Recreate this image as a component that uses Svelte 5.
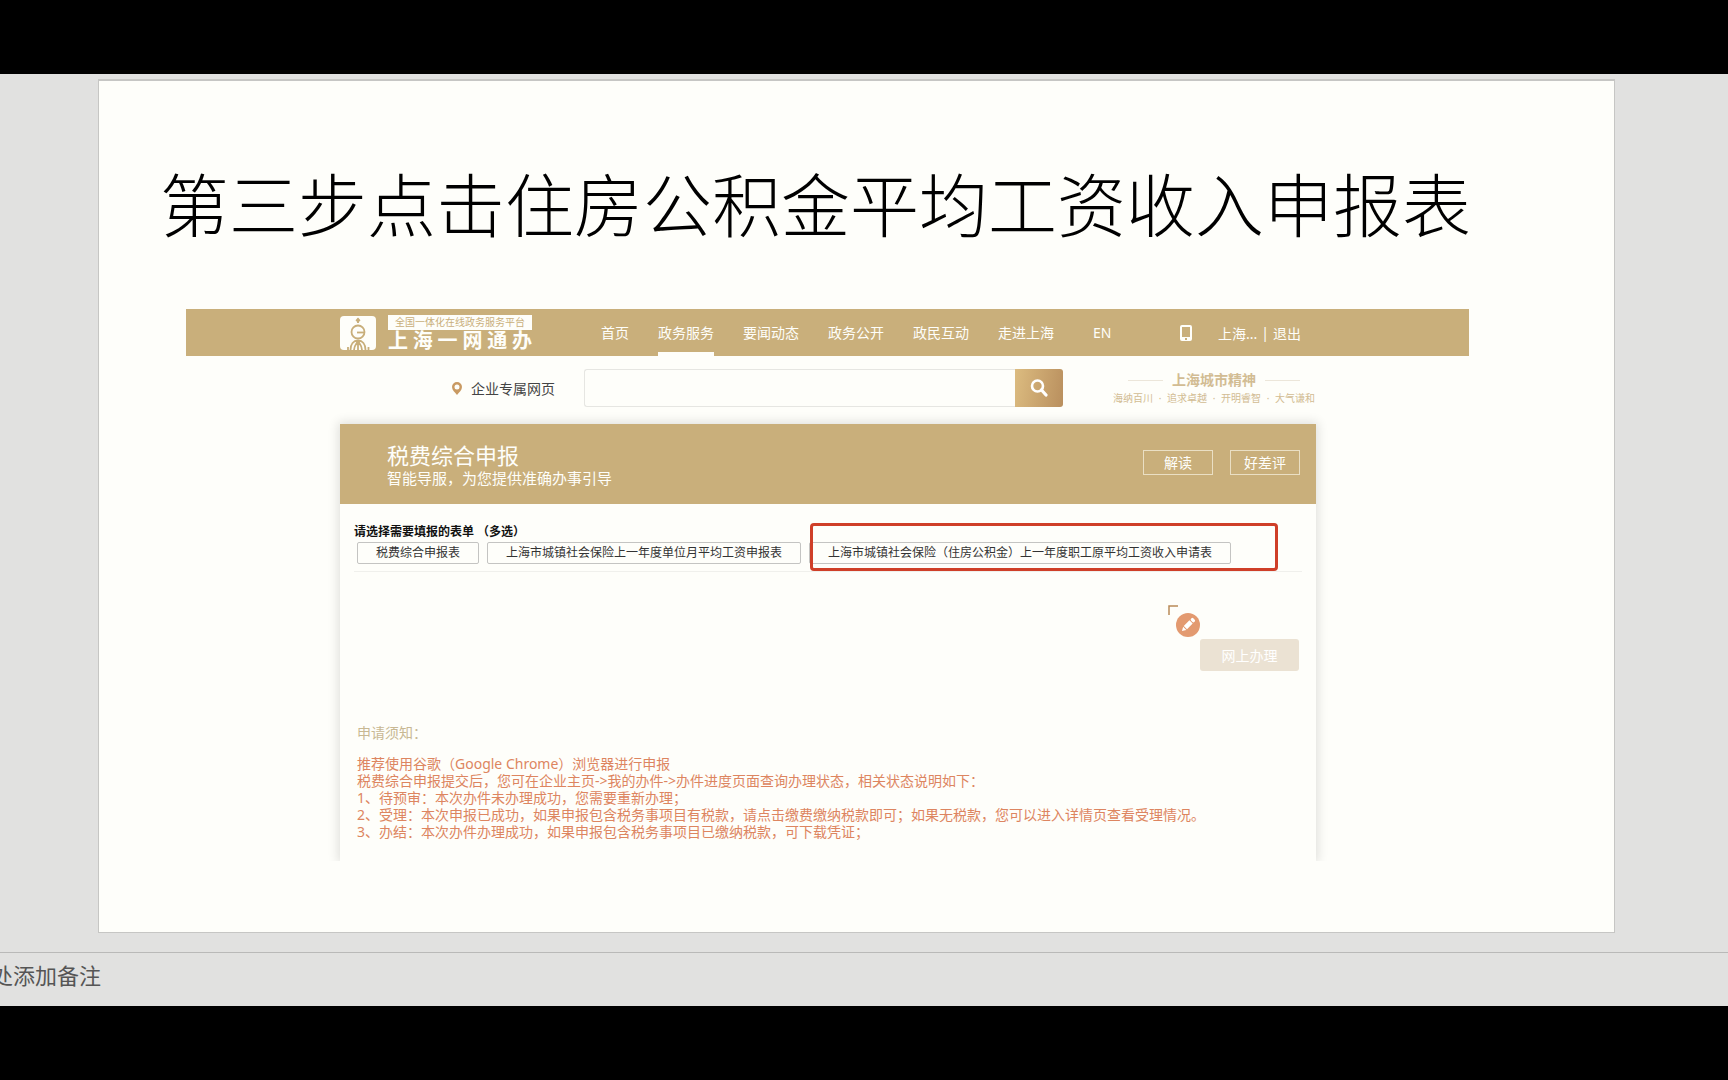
<script>
  const nav = ['首页', '政务服务', '要闻动态', '政务公开', '政民互动', '走进上海'];
  const active = '政务服务';
  const forms = ['税费综合申报表', '上海市城镇社会保险上一年度单位月平均工资申报表'];
  const target = '上海市城镇社会保险（住房公积金）上一年度职工原平均工资收入申请表';
  const notices = [
    '推荐使用谷歌（Google Chrome）浏览器进行申报',
    '税费综合申报提交后，您可在企业主页->我的办件->办件进度页面查询办理状态，相关状态说明如下：',
    '1、待预审：本次办件未办理成功，您需要重新办理；',
    '2、受理：本次申报已成功，如果申报包含税务事项目有税款，请点击缴费缴纳税款即可；如果无税款，您可以进入详情页查看受理情况。',
    '3、办结：本次办件办理成功，如果申报包含税务事项目已缴纳税款，可下载凭证；'
  ];
</script>

<div class="screen">
  <main class="stage">
    <article class="slide">
      <h1>第三步点击住房公积金平均工资收入申报表</h1>

      <section class="site">
        <header class="bar">
          <a class="brand" href="#home">
            <svg class="logo" viewBox="0 0 36 34" aria-hidden="true">
              <rect width="36" height="34" rx="4" fill="#fefefa" />
              <g fill="none" stroke="#c8ae7a" stroke-width="1.800">
                <path d="M18 7V2.500" />
                <circle cx="18" cy="16" r="6.500" />
                <path d="M17 16.500h7" />
                <path d="M10.500 34c0-6 3-9.500 7.500-9.500s7.500 3.500 7.500 9.500M18 25v9M14 34c0-4 2-6 4-9 2 3 4 5 4 9" />
                <path d="M8 34v-3M28.500 34v-3" />
              </g>
              <path d="M18 1.500l2.500 2.700L18 7l-2.500-2.800z" fill="#c8ae7a" />
            </svg>
            <span class="names">
              <span class="tag">全国一体化在线政务服务平台</span>
              <strong>上海一网通办</strong>
            </span>
          </a>
          <nav>
            {#each nav as item}
              <a href="#nav" class:on={item === active}>{item}</a>
            {/each}
            <a class="en" href="#en">EN</a>
          </nav>
          <div class="account">
            <svg class="phone" viewBox="0 0 12 16" aria-hidden="true">
              <path fill="#fefefa" fill-rule="evenodd" d="M2 0h8a2 2 0 0 1 2 2v12a2 2 0 0 1-2 2H2a2 2 0 0 1-2-2V2a2 2 0 0 1 2-2zM2 2v10h8V2zM5 13v2h2v-2z" />
            </svg>
            <span>上海...</span><span class="sep">|</span><a href="#logout">退出</a>
          </div>
        </header>

        <div class="tools">
          <a class="place" href="#company">
            <svg viewBox="0 0 10 13" aria-hidden="true">
              <path fill="#c99a62" fill-rule="evenodd" d="M5 0a5 5 0 0 1 5 5c0 3-3 5.500-5 8-2-2.500-5-5-5-8a5 5 0 0 1 5-5zM5 2.500a2.500 2.500 0 1 0 0 5 2.500 2.500 0 0 0 0-5z" />
            </svg>
            企业专属网页
          </a>
          <form class="search">
            <input type="text" aria-label="搜索" />
            <button type="button" aria-label="搜索">
              <svg viewBox="0 0 18 18" aria-hidden="true">
                <circle cx="7.500" cy="7" r="5.500" fill="none" stroke="#fff" stroke-width="2.600" />
                <path d="M11.500 11l4.500 5" stroke="#fff" stroke-width="3.200" stroke-linecap="round" />
              </svg>
            </button>
          </form>
          <div class="spirit">
            <div class="motto">上海城市精神</div>
            <div class="virtues">
              <span>海纳百川</span><i>·</i><span>追求卓越</span><i>·</i><span>开明睿智</span><i>·</i><span>大气谦和</span>
            </div>
          </div>
        </div>

        <section class="card">
          <header class="head">
            <div>
              <h2>税费综合申报</h2>
              <p>智能导服，为您提供准确办事引导</p>
            </div>
            <div class="links">
              <button type="button">解读</button>
              <button type="button">好差评</button>
            </div>
          </header>
          <div class="body">
            <div class="pick">
              <h3>请选择需要填报的表单 （多选）</h3>
              <div class="forms">
                {#each forms as form}
                  <button type="button">{form}</button>
                {/each}
                <div class="marked"><button type="button">{target}</button></div>
              </div>
            </div>
            <div class="actions">
              <span class="float">
                <svg viewBox="0 0 32 32" aria-hidden="true">
                  <path d="M1 10V1h9" fill="none" stroke="#b98a58" stroke-width="1.500" />
                  <circle cx="20" cy="20" r="12" fill="#e39a70" />
                  <g transform="rotate(45 20 20)" fill="#fff">
                    <rect x="17.700" y="11.500" width="4.600" height="3.200" rx="1.300" />
                    <path d="M17.700 15.700h4.600v8h-4.600zM17.700 24.600h4.600L20 28.500z" />
                  </g>
                </svg>
              </span>
              <button type="button" disabled>网上办理</button>
            </div>
            <div class="notice">
              <h4>申请须知：</h4>
              {#each notices as line}
                <p>{line}</p>
              {/each}
            </div>
          </div>
        </section>
      </section>
    </article>
  </main>
  <footer>处添加备注</footer>
</div>

<style>
  :global(body) {
    margin: 0;
    background: #000;
    font-family: 'Noto Sans', 'Noto Sans CJK SC', sans-serif;
  }
  .screen, .screen * { box-sizing: border-box; }
  h1, h2, h3, h4, p { margin: 0; font-weight: 400; }
  a { color: inherit; text-decoration: none; }
  button { font: inherit; padding: 0; margin: 0; }
  svg { display: block; }

  .screen {
    min-height: 100vh;
    padding: 74px 0;
    display: flex;
    flex-direction: column;
    overflow: hidden;
    background: #000;
  }
  .stage {
    flex: 1;
    padding: 5px 113px 18px 98px;
    background: #e1e1e0;
  }
  .slide {
    padding: 79px 145px 71px 87px;
    background: #fefefa;
    border: 1px solid #c6c6c4;
    border-top-width: 2px;
  }
  h1 {
    height: 84px;
    margin: 0 -100px 65px -26px;
    font-family: 'Noto Sans CJK SC', sans-serif;
    font-size: 69px;
    font-weight: 300;
    line-height: 84px;
    color: #000;
    white-space: nowrap;
  }
  .site { overflow: hidden; }

  .bar {
    display: flex;
    height: 47px;
    padding: 0 168px 0 154px;
    background: #c9af7b;
    color: #fefefa;
    font-size: 14px;
    white-space: nowrap;
  }
  .brand { display: flex; align-items: center; gap: 12px; }
  .logo { width: 36px; height: 34px; }
  .names { display: flex; flex-direction: column; width: 144px; }
  .tag {
    background: #fefefa;
    color: #c9af7b;
    font-size: 10px;
    line-height: 15px;
    text-align: center;
  }
  .names strong {
    font-size: 20px;
    font-weight: 700;
    line-height: 21px;
    text-align-last: justify;
  }
  nav { display: flex; gap: 29px; margin-left: 69px; }
  nav a { line-height: 47px; }
  nav a.on { box-shadow: inset 0 -4px #fefefa; }
  .en { margin-left: 10px; }
  .account { display: flex; align-items: center; margin-left: auto; }
  .phone { width: 12px; height: 16px; margin-right: 26px; }
  .sep { margin: 0 4px; }

  .tools {
    display: flex;
    align-items: center;
    padding: 13px 154px 17px 266px;
  }
  .place {
    display: flex;
    align-items: center;
    gap: 9px;
    font-size: 14px;
    color: #444;
    white-space: nowrap;
  }
  .place svg { width: 10px; height: 13px; }
  .search { display: flex; flex: 1; height: 38px; margin: 0 50px 0 29px; }
  .search input {
    flex: 1;
    min-width: 0;
    border: 1px solid #e6e6e2;
    border-right: 0;
    border-radius: 3px 0 0 3px;
    background: #fefefa;
    font: inherit;
  }
  .search button {
    display: grid;
    place-items: center;
    width: 48px;
    border: 0;
    border-radius: 0 3px 3px 0;
    background: linear-gradient(100deg, #dcbc80, #b98f5e);
  }
  .search button svg { width: 18px; height: 18px; }
  .spirit { width: 202px; color: #d2bc93; }
  .motto {
    display: flex;
    align-items: center;
    justify-content: center;
    gap: 9px;
    font-size: 14px;
    font-weight: 700;
    line-height: 20px;
  }
  .motto::before, .motto::after {
    content: '';
    width: 35px;
    height: 1px;
    background: #ece6da;
  }
  .virtues {
    display: flex;
    justify-content: space-between;
    font-size: 10px;
    line-height: 16px;
    white-space: nowrap;
  }
  .virtues i { font-style: normal; }

  .card {
    margin: 0 153px 0 154px;
    background: #fefefa;
    box-shadow: 0 0 10px 2px rgba(0, 0, 0, 0.12);
  }
  .head {
    display: flex;
    justify-content: space-between;
    height: 80px;
    padding: 18px 16px 0 47px;
    background: #c9af7b;
    color: #fefefa;
  }
  h2 { font-size: 22px; line-height: 26px; }
  .head p { font-size: 15px; line-height: 20px; }
  .links { display: flex; gap: 17px; padding-top: 8px; }
  .links button {
    width: 70px;
    height: 25px;
    border: 1px solid #eadfc4;
    background: none;
    color: #fefefa;
    font-size: 14px;
    line-height: 24px;
  }
  .body { padding: 18px 14px 21px; }
  .pick { padding-bottom: 7px; border-bottom: 1px solid #f0f0ec; }
  h3 {
    font-size: 12px;
    font-weight: 700;
    line-height: 20px;
    color: #111;
  }
  .forms { display: flex; gap: 8px; padding-left: 3px; white-space: nowrap; }
  .forms button {
    height: 22px;
    padding: 0 18px;
    border: 1px solid #c4c4c2;
    border-radius: 2px;
    background: #fefefa;
    color: #333;
    font-size: 12px;
    line-height: 20px;
  }
  .marked { position: relative; display: flex; }
  .marked::after {
    content: '';
    position: absolute;
    inset: -19px -47px -7px 1px;
    border: 3px solid #cf3f28;
    border-radius: 4px;
  }
  .actions {
    position: relative;
    display: flex;
    justify-content: flex-end;
    padding: 67px 3px 52px;
  }
  .actions button {
    width: 99px;
    height: 32px;
    border: 0;
    border-radius: 3px;
    background: #ebe2d3;
    color: #fff;
    font-size: 14px;
  }
  .float { position: absolute; right: 102px; top: 33px; }
  .float svg { width: 32px; height: 32px; }
  .notice { padding-left: 3px; white-space: nowrap; }
  h4 { margin-bottom: 12px; font-size: 14px; line-height: 20px; color: #c8b893; }
  .notice p { font-size: 14px; line-height: 17px; color: #dd8560; }

  footer {
    height: 54px;
    border-top: 1px solid #b9b9b8;
    background: #e1e1e0;
    color: #555;
    font-size: 22px;
    line-height: 44px;
    text-indent: -9px;
    white-space: nowrap;
  }
</style>
